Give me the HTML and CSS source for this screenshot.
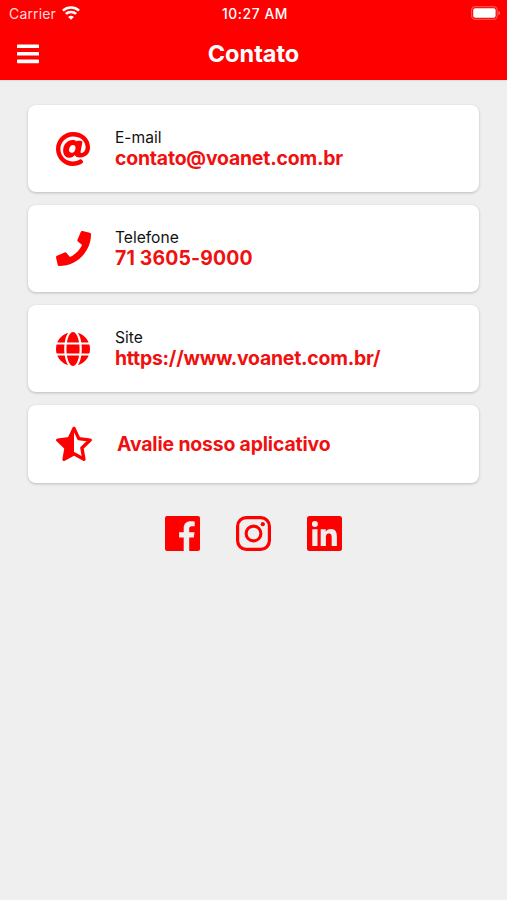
FILE: index.html
```html
<!DOCTYPE html>
<html lang="pt-BR">
<head>
<meta charset="utf-8">
<title>Contato</title>
<link rel="stylesheet" href="styles.css">
</head>
<body>
<header class="header">
  <div class="status">
    <div class="carrier"><span>Carrier</span>
      <svg width="18" height="14" viewBox="0 0 18 14" fill="none" stroke="#fff" stroke-width="2.5"><path d="M.9 4.700C5.400.5 12.600.5 17.100 4.700M3.800 7.900c2.900-2.700 7.500-2.700 10.400 0"/><path d="M9 13.800 6.100 10.900c1.600-1.500 4.200-1.500 5.800 0z" fill="#fff" stroke="none"/></svg>
    </div>
    <time class="clock">10:27 AM</time>
    <svg class="battery" width="30" height="14" viewBox="0 0 30 14"><rect x=".6" y=".6" width="25.6" height="12.8" rx="3.6" fill="none" stroke="#ff5050" stroke-width="1.2"/><rect x="2.2" y="2.3" width="22.4" height="9.4" rx="2" fill="#fff"/><path d="M27.5 4.800c2 .8 2 3.600 0 4.400z" fill="#ff8080"/></svg>
  </div>
  <div class="bar">
    <svg class="menu" width="22" height="20" viewBox="0 0 22 20" fill="#fff"><rect y=".5" width="22" height="3.600" rx=".7"/><rect y="8" width="22" height="3.600" rx=".7"/><rect y="15.600" width="22" height="3.600" rx=".7"/></svg>
    <h1 class="title">Contato</h1>
  </div>
</header>
<main class="content">
  <a class="card">
    <svg class="icon" viewBox="8 8 496 496"><path d="M256 8C118.941 8 8 118.919 8 256c0 137.059 110.919 248 248 248 48.154 0 95.342-14.14 135.408-40.223 12.005-7.815 14.625-24.288 5.552-35.372l-10.177-12.433c-7.671-9.371-21.179-11.667-31.373-5.129C325.92 429.757 291.314 440 256 440c-101.458 0-184-82.542-184-184S154.542 72 256 72c100.139 0 184 57.619 184 160 0 38.786-21.093 79.742-58.17 83.693-17.349-.454-16.91-12.857-13.476-30.024l23.433-121.11C394.653 149.75 383.308 136 368.225 136h-44.981a13.518 13.518 0 0 0-13.432 11.993l-.01.092c-14.697-17.901-40.448-21.775-59.971-21.775-74.58 0-137.831 62.234-137.831 151.46 0 65.303 36.785 105.87 96 105.87 26.984 0 57.369-15.637 74.991-38.333 9.522 34.104 40.613 34.103 70.71 34.103C462.609 379.41 504 307.798 504 232 504 95.653 394.023 8 256 8zm-21.68 304.43c-22.249 0-36.07-15.623-36.07-40.771 0-44.993 30.779-72.729 58.63-72.729 22.292 0 35.601 15.241 35.601 40.77 0 45.061-33.875 72.73-58.161 72.73z"/></svg>
    <div class="info"><span class="label">E-mail</span><strong class="value mail">contato@voanet.com.br</strong></div>
  </a>
  <a class="card">
    <svg class="icon phone" viewBox="0 0 512 512"><path d="M493.4 24.6l-104-24c-11.3-2.6-22.9 3.3-27.5 13.9l-48 112c-4.2 9.8-1.4 21.3 6.9 28l60.6 49.6c-36 76.7-98.9 140.5-177.2 177.2l-49.6-60.6c-6.8-8.3-18.2-11.1-28-6.9l-112 48C3.9 366.5-2 378.1.6 389.4l24 104C27.1 504.2 36.7 512 48 512c256.1 0 464-207.5 464-464 0-11.2-7.7-20.9-18.6-23.4z"/></svg>
    <div class="info"><span class="label">Telefone</span><strong class="value tel">71 3605-9000</strong></div>
  </a>
  <a class="card">
    <svg class="icon" viewBox="0 8 496 496"><path d="M336.5 160C322 70.7 287.8 8 248 8s-74 62.7-88.5 152h177zM152 256c0 22.2 1.2 43.5 3.3 64h185.3c2.1-20.5 3.3-41.8 3.3-64s-1.2-43.5-3.3-64H155.3c-2.1 20.5-3.3 41.8-3.3 64zm324.7-96c-28.6-67.9-86.5-120.4-158-141.6 24.4 33.8 41.2 84.7 50 141.6h108zM177.2 18.4C105.8 39.6 47.8 92.1 19.3 160h108c8.7-56.9 25.5-107.8 49.9-141.6zM487.4 192H372.7c2.1 21 3.3 42.5 3.3 64s-1.2 43-3.3 64h114.6c5.5-20.5 8.6-41.8 8.6-64s-3.1-43.5-8.5-64zM120 256c0-21.5 1.2-43 3.3-64H8.6C3.2 212.5 0 233.8 0 256s3.2 43.5 8.6 64h114.6c-2-21-3.2-42.5-3.2-64zm39.5 96c14.5 89.3 48.7 152 88.5 152s74-62.7 88.5-152h-177zm159.3 141.6c71.4-21.2 129.4-73.7 158-141.6h-108c-8.8 56.9-25.6 107.8-50 141.6zM19.3 352c28.6 67.9 86.5 120.4 158 141.6-24.4-33.8-41.2-84.7-50-141.6h-108z"/></svg>
    <div class="info"><span class="label">Site</span><strong class="value site">https://www.voanet.com.br/</strong></div>
  </a>
  <a class="card rate">
    <svg class="icon star" viewBox="0 0 36 36" stroke="#f00" stroke-width="3.4" stroke-linejoin="round"><path d="M18 2.4l4.8 10.2 11.4 1.5-8.3 7.8 2 11.4L18 27.8l-9.9 5.500 2-11.4-8.3-7.8 11.4-1.500z" fill="none"/><path d="M18 2.400v25.400l-9.900 5.500 2-11.400-8.300-7.800 11.400-1.500z" stroke="none"/></svg>
    <strong class="value review">Avalie nosso aplicativo</strong>
  </a>
  <nav class="social">
    <svg viewBox="0 0 35 35"><path d="M2 0h31a2 2 0 0 1 2 2v31a2 2 0 0 1-2 2h-8.800V21.500h4.600l.7-5.300h-5.300v-3.400c0-1.600.5-2.600 2.700-2.600h2.800V5.400c-.5-.1-2.200-.2-4.100-.2-4.100 0-6.900 2.500-6.900 7v4h-4.600v5.300h4.600V35H2a2 2 0 0 1-2-2V2a2 2 0 0 1 2-2z"/></svg>
    <svg viewBox="0 0 35 35"><rect x="1.600" y="1.600" width="31.800" height="31.800" rx="8.600" fill="none" stroke="#f00" stroke-width="3.200"/><circle cx="17.500" cy="17.500" r="7.400" fill="none" stroke="#f00" stroke-width="3.100"/><circle cx="26.800" cy="8.200" r="2.100"/></svg>
    <svg viewBox="0 0 35 35"><path fill-rule="evenodd" d="M2.500 0h30A2.500 2.500 0 0 1 35 2.500v30a2.500 2.500 0 0 1-2.500 2.500h-30A2.500 2.500 0 0 1 0 32.500v-30A2.500 2.500 0 0 1 2.500 0zM5.300 13.300v16.700h5.200V13.300zM7.900 5a3 3 0 1 0 0 6 3 3 0 0 0 0-6zM13.700 13.300v16.700h5.200v-8.300c0-2.200.4-4.300 3.100-4.300s2.700 2.500 2.700 4.400v8.200h5.200v-9.200c0-4.500-1-7.900-6.200-7.900-2.500 0-4.200 1.400-4.900 2.700h-.1v-2.300z"/></svg>
  </nav>
</main>
</body>
</html>
```
FILE: styles.css
```css
* { box-sizing: border-box; }
body { margin: 0; min-height: 900px; background: #efefef; font-family: Inter, "Liberation Sans", sans-serif; }
svg { display: block; flex: none; }
.header { height: 80px; background: #f00; color: #fff; box-shadow: 0 1px 1px #e8dede; }
.status { display: grid; grid-template-columns: 1fr auto 1fr; align-items: center; height: 26px; padding: 0 6px 0 9px; }
.carrier { display: flex; align-items: center; gap: 6px; font-size: 14px; letter-spacing: .15px; color: #ffdcdc; }
.clock { font-size: 13.8px; font-weight: 500; letter-spacing: .6px; padding-top: 1px; }
.battery { justify-self: end; }
.bar { display: grid; grid-template-columns: 22px 1fr 22px; align-items: center; height: 55px; padding: 0 17px; }
.title { margin: 0; text-align: center; font-size: 23.5px; font-weight: 700; line-height: 30px; letter-spacing: 0; }
.content { display: flex; flex-direction: column; gap: 13px; padding: 24px 28px 0; }
.header + .content { padding-top: 25px; }
.card { display: flex; align-items: center; height: 87px; padding: 0 28px; background: #fff; border-radius: 8px; box-shadow: 0 1px 3px #00000038; }
.icon { width: 34px; height: 34px; fill: #f00; }
.phone { width: 35px; height: 35px; }
.star { width: 36px; height: 36px; }
.rate { height: 78px; }
.info { display: flex; flex-direction: column; margin-left: 25px; padding-bottom: 1px; }
.phone + .info { margin-left: 24px; }
.label { font-size: 15.6px; line-height: 20px; color: #111; }
.value { font-size: 19.4px; font-weight: 700; line-height: 21px; color: #f01010; white-space: nowrap; }
.mail { letter-spacing: -.18px; }
.tel { letter-spacing: .18px; }
.site { letter-spacing: -.22px; }
.review { margin-left: 25px; letter-spacing: -.16px; }
.social { display: flex; justify-content: center; gap: 36px; margin-top: 20px; }
.social svg { width: 35px; height: 35px; fill: #f00; }
```
